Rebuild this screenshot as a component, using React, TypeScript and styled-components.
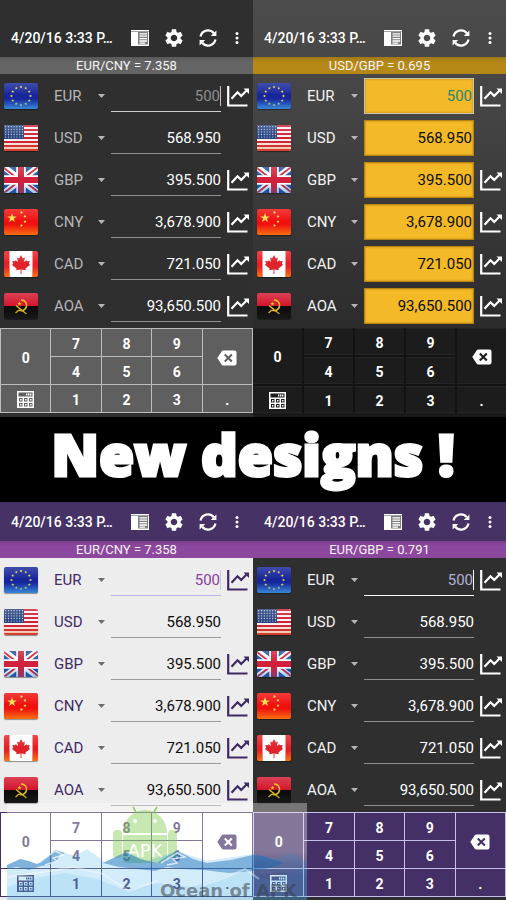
import React, { useId } from "react";
import styled, { createGlobalStyle, ThemeProvider } from "styled-components";
import { MdSettings } from "react-icons/md";

type Skin = {
  page: string;
  bar: string;
  rate: string;
  text: string;
  arrow: string;
  amount: string;
  active: string;
  line: string;
  activeLine: string;
  caret: string;
  icon: string;
  boxed: boolean;
  pad: string;
  key: string;
  keyLine: string;
  keyText: string;
};

const graphite: Skin = {
  page: "#2f2f2f",
  bar: "#2f2f2f",
  rate: "linear-gradient(#5a5a5a, #646464 30%)",
  text: "#b6b6b6",
  arrow: "#b6b6b6",
  amount: "#ffffff",
  active: "#8e8e8e",
  line: "#8f8f8f",
  activeLine: "#cfcfcf",
  caret: "#c4c4c4",
  icon: "#ffffff",
  boxed: false,
  pad: "#2f2f2f",
  key: "#5f5f5f",
  keyLine: "#bdbdbd",
  keyText: "#ffffff",
};

const gold: Skin = {
  page: "linear-gradient(#4b4b4b, #454545 25%, #2b2b2b 80%, #232323)",
  bar: "transparent",
  rate: "linear-gradient(#a0781a, #b58818 30%)",
  text: "#f2f2f2",
  arrow: "#b6b6b6",
  amount: "#0c0c0c",
  active: "#2a8672",
  line: "#b98412",
  activeLine: "#cbc4b4",
  caret: "transparent",
  icon: "#ffffff",
  boxed: true,
  pad: "#191919",
  key: "#1c1c1c",
  keyLine: "#131313",
  keyText: "#ffffff",
};

const light: Skin = {
  page: "#ededed",
  bar: "#463264",
  rate: "linear-gradient(#7c3f8e, #8c479e 30%)",
  text: "#3f2a66",
  arrow: "#6e6e6e",
  amount: "#0c0c0c",
  active: "#8b3f9e",
  line: "#9a9a9a",
  activeLine: "#b9b5e6",
  caret: "#c9c6ea",
  icon: "#3f2a66",
  boxed: false,
  pad: "#ededed",
  key: "#ffffff",
  keyLine: "#443066",
  keyText: "#443066",
};

const violet: Skin = {
  page: "#2f2f2f",
  bar: "#463264",
  rate: "linear-gradient(#7c3f8e, #8c479e 30%)",
  text: "#f2f2f2",
  arrow: "#b6b6b6",
  amount: "#ffffff",
  active: "#b3b0d8",
  line: "#8f8f8f",
  activeLine: "#ffffff",
  caret: "#ffffff",
  icon: "#ffffff",
  boxed: false,
  pad: "#2f2f2f",
  key: "#443066",
  keyLine: "#c8c0ea",
  keyText: "#ffffff",
};

type Themed = { theme: Skin };

const GlobalStyle = createGlobalStyle`
  *, *::before, *::after { box-sizing: border-box; }
  body { margin: 0; background: #000; font-family: Roboto, "Liberation Sans", sans-serif; }
  button, input, select { font: inherit; color: inherit; margin: 0; padding: 0; border: 0; background: none; border-radius: 0; }
  button { cursor: pointer; }
  svg { display: block; flex: none; }
`;

const Page = styled.main`
  position: relative;
  overflow: hidden;
`;

const Pair = styled.div`
  display: grid;
  grid-template-columns: 1fr 1fr;
`;

const Banner = styled.h1`
  margin: 0;
  height: 85px;
  padding-bottom: 12px;
  display: flex;
  align-items: center;
  justify-content: center;
  background: #000;
  color: #fff;
  font-family: "Open Sans", Lato, sans-serif;
  font-weight: 800;
  font-size: 57px;
  line-height: 72px;
  white-space: nowrap;
  -webkit-text-stroke: 3px #fff;
`;

const Panel = styled.section`
  min-width: 0;
  display: flex;
  flex-direction: column;
  background: ${(p: Themed) => p.theme.page};
`;

const Toolbar = styled.header<{ $tall: boolean }>`
  height: ${(p) => (p.$tall ? 57 : 39)}px;
  padding: ${(p) => (p.$tall ? 18 : 0)}px 4px 0 11px;
  display: flex;
  align-items: center;
  background: ${(p) => (p.theme as Skin).bar};
  color: #fff;
`;

const Stamp = styled.h2`
  margin: 0;
  flex: 1;
  min-width: 0;
  font-size: 14px;
  line-height: 20px;
  font-weight: 500;
  white-space: nowrap;
`;

const ToolButton = styled.button<{ $narrow?: boolean }>`
  width: ${(p) => (p.$narrow ? 24 : 34)}px;
  height: 34px;
  display: flex;
  align-items: center;
  justify-content: center;
`;

const Rate = styled.p`
  margin: 0;
  height: 17px;
  background: ${(p: Themed) => p.theme.rate};
  color: #f4f4f4;
  font-size: 13px;
  line-height: 18px;
  text-align: center;
`;

const Rows = styled.ul`
  list-style: none;
  margin: 0;
  padding: 1px 0;
`;

const Row = styled.li`
  height: 42px;
  padding: 0 4px;
  display: grid;
  grid-template-columns: 50px 57px 1fr 28px;
  align-items: center;
`;

const FlagFrame = styled.svg`
  border-radius: 2px;
  box-shadow: 0 1px 1px rgba(0, 0, 0, 0.4);
`;

const Picker = styled.label`
  display: grid;
  grid-template-columns: 1fr;
  align-items: center;
  color: ${(p: Themed) => p.theme.text};

  > * {
    grid-area: 1 / 1;
  }
`;

const PickerSelect = styled.select`
  appearance: none;
  height: 32px;
  font-size: 15px;
  line-height: 20px;
`;

const PickerArrow = styled.svg`
  justify-self: end;
  margin-right: 6px;
  pointer-events: none;
  fill: ${(p: Themed) => p.theme.arrow};
`;

const Field = styled.div<{ $active: boolean }>`
  min-width: 0;
  display: flex;
  align-items: center;
  height: ${(p) => ((p.theme as Skin).boxed ? 36 : 32)}px;
  ${(p) => {
    const t = p.theme as Skin;
    const line = p.$active ? t.activeLine : t.line;
    return t.boxed
      ? `background: #f3b926; border: 1px solid ${line}; padding-right: 1px; box-shadow: inset 0 0 2px #b07c0c;`
      : `border-bottom: 1px solid ${line};`;
  }}
  color: ${(p) => (p.$active ? (p.theme as Skin).active : (p.theme as Skin).amount)};
`;

const Amount = styled.input`
  flex: 1;
  min-width: 0;
  width: 100%;
  height: 100%;
  text-align: right;
  font-size: 15px;
  line-height: 20px;
  outline: none;
`;

const Caret = styled.span`
  width: 1px;
  height: 20px;
  background: ${(p: Themed) => p.theme.caret};
`;

const ChartButton = styled.button`
  justify-self: end;
  color: ${(p: Themed) => p.theme.icon};
`;

const Keypad = styled.div<{ $tall: boolean }>`
  background: ${(p) => (p.theme as Skin).pad};
  padding-bottom: ${(p) => (p.$tall ? 4 : 3)}px;
  flex: 1;
`;

const Keys = styled.div`
  display: grid;
  grid-template-columns: repeat(5, 1fr);
  grid-template-rows: repeat(3, 27px);
  grid-template-areas:
    "zero seven eight nine erase"
    "zero four five six erase"
    "calc one two three dot";
  gap: ${(p) => ((p.theme as Skin).boxed ? 2 : 1)}px;
  padding: ${(p) => ((p.theme as Skin).boxed ? 0 : 1)}px;
  background: ${(p) => (p.theme as Skin).keyLine};
`;

const Key = styled.button<{ $area: string }>`
  grid-area: ${(p) => p.$area};
  display: flex;
  align-items: center;
  justify-content: center;
  padding-top: 2px;
  background: ${(p) => (p.theme as Skin).key};
  color: ${(p) => (p.theme as Skin).keyText};
  font-size: 14px;
  line-height: 20px;
  font-weight: 700;
  box-shadow: ${(p) => ((p.theme as Skin).boxed ? "inset 0 1px 0 #262626, inset 0 -1px 0 #262626" : "none")};
`;

const Watermark = styled.div`
  position: absolute;
  left: 7px;
  bottom: 0;
  width: 300px;
  height: 97px;
  pointer-events: none;
  background: linear-gradient(rgba(255, 255, 255, 0.34) 50%, rgba(255, 255, 255, 0.12) 75%);
  overflow: hidden;
`;

const WatermarkName = styled.span`
  position: absolute;
  right: 10px;
  bottom: 0;
  font: 700 18px/18px "DejaVu Sans", sans-serif;
  color: rgba(60, 60, 70, 0.55);
  white-space: nowrap;
`;

const star = (cx: number, cy: number, r: number, turn = 0) =>
  Array.from({ length: 10 }, (_, i) => {
    const a = ((i * 36 - 90 + turn) * Math.PI) / 180;
    const d = i % 2 ? r * 0.4 : r;
    return `${(cx + d * Math.cos(a)).toFixed(2)},${(cy + d * Math.sin(a)).toFixed(2)}`;
  }).join(" ");

const flagArt: Record<string, { glow: string; art: React.ReactNode }> = {
  EUR: {
    glow: "#3fa0e8",
    art: (
      <>
        <rect width="34" height="26" fill="#17269a" />
        {Array.from({ length: 12 }, (_, i) => {
          const a = (i * Math.PI) / 6;
          return <polygon key={i} points={star(17 + 9.5 * Math.sin(a), 13 - 9 * Math.cos(a), 1.6)} fill="#f4e04a" />;
        })}
      </>
    ),
  },
  USD: {
    glow: "#e0701c",
    art: (
      <>
        <rect width="34" height="26" fill="#f6f1f1" />
        {[0, 4, 8, 12, 16, 20, 24].map((y) => (
          <rect key={y} y={y} width="34" height="2" fill="#cf2138" />
        ))}
        <rect width="20" height="14" fill="#27427f" />
        {Array.from({ length: 35 }, (_, i) => (
          <circle key={i} cx={1.7 + (i % 7) * 2.8} cy={1.7 + Math.floor(i / 7) * 2.6} r="0.65" fill="#c3d0e8" />
        ))}
      </>
    ),
  },
  GBP: {
    glow: "#1a63b8",
    art: (
      <>
        <rect width="34" height="26" fill="#23509c" />
        <path d="M0 0L34 26M34 0L0 26" stroke="#fff" strokeWidth="6" />
        <path d="M0 1L14 12M20 14L34 25M34 0L20 11M14 15L0 26" stroke="#d0203c" strokeWidth="1.8" />
        <path d="M17 0V26M0 13H34" stroke="#fff" strokeWidth="9.5" />
        <path d="M17 0V26M0 13H34" stroke="#d0203c" strokeWidth="6" />
      </>
    ),
  },
  CNY: {
    glow: "#f88a10",
    art: (
      <>
        <rect width="34" height="26" fill="#f01010" />
        <polygon points={star(8, 9, 5)} fill="#fbe04c" />
        <polygon points={star(17.5, 3.5, 1.8, 20)} fill="#fbe04c" />
        <polygon points={star(21, 7.5, 1.8, 40)} fill="#fbe04c" />
        <polygon points={star(21, 12.5, 1.8)} fill="#fbe04c" />
        <polygon points={star(17.5, 16.5, 1.8, 20)} fill="#fbe04c" />
      </>
    ),
  },
  CAD: {
    glow: "#f88a10",
    art: (
      <>
        <rect width="34" height="26" fill="#ea1f26" />
        <rect x="5.5" width="23" height="26" fill="#fff" />
        <path
          d="M17 4l1.9 3.6 2-1-.9 4.6 2.3-2.2.6 1.3 2.9-.4-1 3 1.5.9-4.9 3.7.5 1.8-4.5-.7.1 4.4h-1l.1-4.4-4.5.7.5-1.8-4.9-3.7 1.5-.9-1-3 2.9.4.6-1.3 2.3 2.2-.9-4.6 2 1z"
          fill="#e0222a"
        />
      </>
    ),
  },
  AOA: {
    glow: "#2a2a2a",
    art: (
      <>
        <rect width="34" height="13" fill="#d4182f" />
        <rect y="13" width="34" height="13" fill="#0c0c0c" />
        <path d="M17 7c4.500 0 6 3.500 5.400 6.500-.6 3.200-3.800 5-7.400 3.700" fill="none" stroke="#e8c21c" strokeWidth="1.500" />
        <path d="M12 12.500l10.500 8.500M11.500 20l3.500-3" stroke="#e8c21c" strokeWidth="1.300" />
        <polygon points={star(15.5, 10.8, 2.3)} fill="#e8c21c" />
      </>
    ),
  },
};

function Flag({ code }: { code: string }) {
  const id = useId();
  const { glow, art } = flagArt[code];
  const bright = code === "EUR" || code === "CNY" || code === "CAD";
  return (
    <FlagFrame width="34" height="26" viewBox="0 0 34 26" role="img" aria-label={`${code} flag`}>
      <defs>
        <linearGradient id={`${id}g`} x1="0" y1="0" x2="0" y2="1">
          <stop offset="0.6" stopColor={glow} stopOpacity="0" />
          <stop offset="1" stopColor={glow} stopOpacity={bright ? 0.8 : 0.4} />
        </linearGradient>
        <linearGradient id={`${id}s`} x1="0" y1="0" x2="0" y2="1">
          <stop offset="0" stopColor="#fff" stopOpacity="0.18" />
          <stop offset="1" stopColor="#fff" stopOpacity="0.02" />
        </linearGradient>
      </defs>
      {art}
      {code === "CAD" ? (
        <path d="M0 0H5.500V26H0zM28.500 0H34V26H28.500z" fill={`url(#${id}g)`} />
      ) : (
        <rect width="34" height="26" fill={`url(#${id}g)`} />
      )}
      <rect width="34" height="11" fill={`url(#${id}s)`} />
    </FlagFrame>
  );
}

const ReaderIcon = () => (
  <svg width="18" height="17" viewBox="0 0 18 17">
    <path d="M0 1H18V17H0z" fill="#fff" />
    <path d="M7 3H17V15.500H7z" fill="#4a4a50" fillOpacity="0.7" />
    <path d="M8.500 4.800H16M8.500 7.200H16M8.500 9.600H16M8.500 12H16M8.500 14.200H14" stroke="#fff" strokeWidth="1.300" />
    <path d="M0 2.500H18" stroke="#8a8a90" strokeWidth="0.800" />
  </svg>
);

const SyncIcon = () => (
  <svg width="18" height="18" viewBox="0 0 18 18">
    <path d="M1.500 7.400A7.600 7.600 0 0 1 14.800 4.200M16.500 10.600A7.600 7.600 0 0 1 3.200 13.800" fill="none" stroke="#fff" strokeWidth="2.200" />
    <path d="M17.400 1.500V7H11.800zM0.600 16.500V11H6.200z" fill="#fff" />
  </svg>
);

const DotsIcon = () => (
  <svg width="4" height="14" viewBox="0 0 4 14" fill="#fff">
    <circle cx="2" cy="2.500" r="1.500" />
    <circle cx="2" cy="7" r="1.500" />
    <circle cx="2" cy="11.500" r="1.500" />
  </svg>
);

const ChartIcon = () => (
  <svg width="22" height="21" viewBox="0 0 22 21">
    <path d="M1.200 0V19.500H20.500" fill="none" stroke="currentColor" strokeWidth="2.200" />
    <path d="M4.500 12.800L10.500 6.300L14.200 9.900L19.800 4.200" fill="none" stroke="currentColor" strokeWidth="2.200" />
    <path d="M16.500 2.500H22V8z" fill="currentColor" />
  </svg>
);

const EraseIcon = ({ cross }: { cross: string }) => (
  <svg width="20" height="16" viewBox="0 0 20 16">
    <path d="M6.200 0.500H17.500A2 2 0 0 1 19.500 2.500V13.500A2 2 0 0 1 17.500 15.500H6.200Q5.200 15.500 4.600 14.600L0.300 8L4.600 1.400Q5.200 0.500 6.200 0.500z" fill="currentColor" />
    <path d="M7.800 4.500L14.800 11.500M14.800 4.500L7.800 11.500" stroke={cross} strokeWidth="2" />
  </svg>
);

const CalcIcon = ({ hole }: { hole: string }) => (
  <svg width="17" height="17" viewBox="0 0 17 17">
    <rect width="17" height="17" fill="currentColor" />
    <g fill={hole}>
      <rect x="1.500" y="1.500" width="14" height="4" />
      {[7, 12].map((y) => [2, 7, 12].map((x) => <rect key={`${x}-${y}`} x={x} y={y} width="3.500" height="3.500" />))}
    </g>
    <path d="M9 3.500H14.500" stroke="currentColor" strokeWidth="2" strokeDasharray="1.400 0.600" />
    <g fill="currentColor">
      {[8, 13].map((y) => [3, 8, 13].map((x) => <rect key={`${x}-${y}`} x={x} y={y} width="1.500" height="1.500" />))}
    </g>
  </svg>
);

const amounts: [string, string][] = [
  ["EUR", "500"],
  ["USD", "568.950"],
  ["GBP", "395.500"],
  ["CNY", "3,678.900"],
  ["CAD", "721.050"],
  ["AOA", "93,650.500"],
];

const digits: [string, string][] = [
  ["zero", "0"],
  ["seven", "7"],
  ["eight", "8"],
  ["nine", "9"],
  ["four", "4"],
  ["five", "5"],
  ["six", "6"],
  ["one", "1"],
  ["two", "2"],
  ["three", "3"],
  ["dot", "."],
];

function Converter({ skin, rate, tall = false }: { skin: Skin; rate: string; tall?: boolean }) {
  return (
    <ThemeProvider theme={skin}>
      <Panel>
        <Toolbar $tall={tall}>
          <Stamp>4/20/16 3:33 P…</Stamp>
          <ToolButton aria-label="List"><ReaderIcon /></ToolButton>
          <ToolButton aria-label="Settings"><MdSettings size={22} /></ToolButton>
          <ToolButton aria-label="Refresh"><SyncIcon /></ToolButton>
          <ToolButton $narrow aria-label="More"><DotsIcon /></ToolButton>
        </Toolbar>
        <Rate>{rate}</Rate>
        <Rows>
          {amounts.map(([code, value], i) => (
            <Row key={code}>
              <Flag code={code} />
              <Picker>
                <PickerSelect aria-label="Currency" defaultValue={code}>
                  {amounts.map(([c]) => (
                    <option key={c}>{c}</option>
                  ))}
                </PickerSelect>
                <PickerArrow width="7" height="4" viewBox="0 0 7 4"><path d="M0 0H7L3.500 4z" /></PickerArrow>
              </Picker>
              <Field $active={i === 0}>
                <Amount aria-label={`${code} amount`} defaultValue={value} />
                {i === 0 && !skin.boxed && <Caret />}
              </Field>
              {code !== "USD" && <ChartButton aria-label={`${code} chart`}><ChartIcon /></ChartButton>}
            </Row>
          ))}
        </Rows>
        <Keypad $tall={tall}>
          <Keys>
            {digits.map(([area, label]) => (
              <Key key={area} $area={area}>{label}</Key>
            ))}
            <Key $area="erase" aria-label="Backspace"><EraseIcon cross={skin.key} /></Key>
            <Key $area="calc" aria-label="Calculator"><CalcIcon hole={skin.key} /></Key>
          </Keys>
        </Keypad>
      </Panel>
    </ThemeProvider>
  );
}

const OceanArt = () => (
  <svg width="300" height="97" viewBox="0 0 300 97">
    <g fill="#7cc844" fillOpacity="0.42">
      <path d="M116 30A22 23 0 0 1 160 30z" />
      <path d="M116 32H160V56Q160 60 156 60H120Q116 60 116 56z" />
      <rect x="106" y="27" width="9" height="28" rx="4" />
      <rect x="161" y="27" width="9" height="28" rx="4" />
    </g>
    <path d="M129 9L126 4M147 9L150 4" stroke="#8ccf58" strokeWidth="1.500" />
    <circle cx="128" cy="18" r="2" fill="#fff" />
    <circle cx="148" cy="18" r="2" fill="#fff" />
    <text x="138" y="54" textAnchor="middle" fontFamily="DejaVu Sans, sans-serif" fontSize="18" fill="#fff">APK</text>
    <path
      d="M0 62L14 56L30 61L48 47L68 53L80 46L98 59L120 50L140 58L170 48L200 58L246 51L262 54L270 56L286 49L300 60V97H0z"
      fill="#1f9fe8"
      fillOpacity="0.2"
    />
    <path
      d="M0 62L13 56L22 58L30 61L40 54L48 47L58 50L52 53L50 58L42 62L34 63L22 67L10 64L0 66zM96 60L108 54L119 49L133 56L150 60L160 53L171 48L186 56L200 60L224 57L246 52L246 68L222 70L196 67L174 66L160 64L148 68L130 66L112 64zM246 52L256 53L277 60L262 65L246 68z"
      fill="#0f64b0"
      fillOpacity="0.42"
    />
    <path d="M32 60L48 48L56 52L46 55L50 58L38 62M154 60L170 50L178 54L166 56L170 60L160 62" fill="none" stroke="#fff" strokeOpacity="0.7" strokeWidth="1.500" />
    <path
      d="M0 84L24 76L58 70L90 76L118 87L150 80L184 84L216 74L238 66L262 78L284 70L300 66V97H0z"
      fill="#1f9fe8"
      fillOpacity="0.12"
    />
    <path d="M0 74L30 70L66 64L96 71L122 88L150 78M196 82L220 74L238 66L252 76" fill="none" stroke="#fff" strokeOpacity="0.4" strokeWidth="2" />
  </svg>
);

export default function App() {
  return (
    <>
      <GlobalStyle />
      <Page>
        <Pair>
          <Converter skin={graphite} rate="EUR/CNY = 7.358" tall />
          <Converter skin={gold} rate="USD/GBP = 0.695" tall />
        </Pair>
        <Banner>New designs !</Banner>
        <Pair>
          <Converter skin={light} rate="EUR/CNY = 7.358" />
          <Converter skin={violet} rate="EUR/GBP = 0.791" />
        </Pair>
        <Watermark>
          <OceanArt />
          <WatermarkName>Ocean of APK</WatermarkName>
        </Watermark>
      </Page>
    </>
  );
}
